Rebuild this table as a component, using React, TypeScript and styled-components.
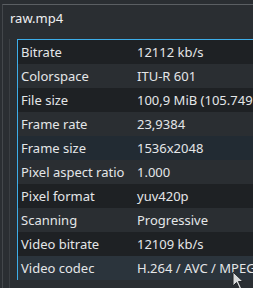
import React from "react";
import styled, { createGlobalStyle } from "styled-components";

const Global = createGlobalStyle`
  html, body { margin: 0; padding: 0; background: #2a2e32; overflow: hidden; }
  body { font-family: "Noto Sans", "DejaVu Sans", sans-serif; }
`;

const Page = styled.div`
  width: 253px;
  height: 288px;
  background: #2a2e32;
  padding: 4px 0 0 2px;
  box-sizing: border-box;
  overflow: hidden;
`;

const Frame = styled.div`
  border-top: 1px solid #5b5f63;
  border-left: 1px solid #43474b;
  height: 100%;
  box-sizing: border-box;
  padding: 0 0 0 6px;
  display: flex;
  flex-direction: column;
`;

const Title = styled.div`
  color: #eff0f1;
  font-size: 13px;
  line-height: 17px;
  padding: 5px 0 0 1px;
  height: 34px;
  box-sizing: border-box;
`;

const Scroll = styled.div`
  border-left: 1px solid #3a3e42;
  padding-left: 7px;
  flex: 1;
  overflow: hidden;
`;

const Table = styled.div`
  border-top: 1px solid #3daee9;
  border-left: 1px solid #3daee9;
  width: 400px;
  display: flex;
  flex-direction: column;
`;

const Row = styled.div<{ $tone: "dark" | "light" | "sel" | "hover" }>`
  display: grid;
  grid-template-columns: 116px 1fr;
  height: 24px;
  align-items: center;
  background: ${(p) =>
    p.$tone === "dark"
      ? "#1e2124"
      : p.$tone === "light"
      ? "#2a2e32"
      : p.$tone === "sel"
      ? "#222b33"
      : "#2b343c"};
  color: #e4e6e8;
  font-size: 13px;
  white-space: nowrap;
`;

const Cell = styled.span`
  padding-left: 3px;
`;

const rows: [string, string][] = [
  ["Bitrate", "12112 kb/s"],
  ["Colorspace", "ITU-R 601"],
  ["File size", "100,9 MiB (105.749.000 bytes)"],
  ["Frame rate", "23,9384"],
  ["Frame size", "1536x2048"],
  ["Pixel aspect ratio", "1.000"],
  ["Pixel format", "yuv420p"],
  ["Scanning", "Progressive"],
  ["Video bitrate", "12109 kb/s"],
  ["Video codec", "H.264 / AVC / MPEG-4 AVC / MPEG-4 part 10"],
];

const Cursor = styled.svg`
  position: absolute;
  left: 232px;
  top: 271px;
`;

export default function App() {
  return (
    <>
      <Global />
      <Page>
        <Frame>
          <Title>raw.mp4</Title>
          <Scroll>
            <Table>
              {rows.map(([k, v], i) => (
                <Row
                  key={k}
                  $tone={i === 4 ? "sel" : i === 9 ? "hover" : i % 2 === 0 ? "dark" : "light"}
                >
                  <Cell>{k}</Cell>
                  <Cell>{v}</Cell>
                </Row>
              ))}
            </Table>
          </Scroll>
        </Frame>
      </Page>
      <Cursor width="14" height="20" viewBox="0 0 14 20">
        <path d="M1 1 L1 15 L4.5 11.5 L7.5 18 L9.5 17 L6.5 10.5 L11 10.5 Z" fill="#d8d9da" stroke="#232629" strokeWidth="1" />
      </Cursor>
    </>
  );
}
